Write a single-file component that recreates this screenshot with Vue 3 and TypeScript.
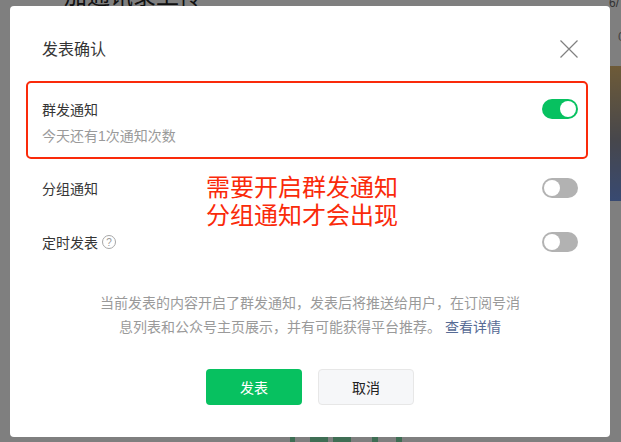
<script setup lang="ts">
import { ref } from 'vue'

interface SwitchRow {
  label: string
  on: boolean
  hint?: boolean
}

const massNotify = ref(true)

const rows = ref<SwitchRow[]>([
  { label: '分组通知', on: false },
  { label: '定时发表', on: false, hint: true },
])

// slivers of the page's green heading that show below the dialog
const slivers = [
  { left: 0, width: 5 },
  { left: 20, width: 18 },
  { left: 43, width: 18 },
  { left: 82, width: 6 },
  { left: 106, width: 6 },
]
</script>

<template>
  <div class="page">
    <!-- page behind the mask -->
    <div class="bg-title">加通讯录上传</div>
    <div class="bg-count">6/</div>
    <div class="bg-digit">0</div>
    <div class="bg-cover"></div>
    <div class="bg-green">
      <i v-for="s in slivers" :key="s.left" :style="{ left: s.left + 'px', width: s.width + 'px' }"></i>
    </div>
    <div class="mask"></div>

    <div class="dialog">
      <div class="head">
        <span class="title">发表确认</span>
        <button class="close" aria-label="关闭">
          <svg width="18" height="18" viewBox="0 0 18 18">
            <path d="M.5.5l17 17M17.5.5l-17 17" stroke="#808080" stroke-width="1.2" fill="none" />
          </svg>
        </button>
      </div>

      <div class="notify-box">
        <div class="row">
          <span class="label">群发通知</span>
          <button class="switch" :class="{ on: massNotify }" @click="massNotify = !massNotify"></button>
        </div>
        <div class="sub">今天还有1次通知次数</div>
      </div>

      <div class="rows">
        <div v-for="r in rows" :key="r.label" class="row">
          <span class="label">{{ r.label }}</span>
          <svg v-if="r.hint" class="help" width="14" height="14" viewBox="0 0 14 14">
            <circle cx="7" cy="7" r="6.5" fill="none" stroke="#a6a6a6" />
            <text x="7" y="10.5" text-anchor="middle" font-size="10" fill="#999" font-family="Liberation Sans, sans-serif">?</text>
          </svg>
          <button class="switch" :class="{ on: r.on }" @click="r.on = !r.on"></button>
        </div>
        <div class="annotation">需要开启群发通知<br />分组通知才会出现</div>
      </div>

      <p class="desc">
        当前发表的内容开启了群发通知，发表后将推送给用户，在订阅号消息列表和公众号主页展示，并有可能获得平台推荐。
        <a class="link">查看详情</a>
      </p>

      <div class="actions">
        <button class="btn primary">发表</button>
        <button class="btn">取消</button>
      </div>
    </div>
  </div>
</template>

<style>
html,
body {
  margin: 0;
  background: #7f7f7f;
}
</style>

<style scoped>
.page {
  position: relative;
  width: 621px;
  height: 442px;
  overflow: hidden;
  background: #fff;
  font-family: "Liberation Sans", "Noto Sans CJK SC", sans-serif;
}
.bg-title {
  position: absolute;
  left: 64px;
  top: -18px;
  font-size: 23px;
  line-height: 28px;
  color: #222;
  white-space: nowrap;
}
.bg-count {
  position: absolute;
  left: 609px;
  top: -4px;
  font-size: 12px;
  line-height: 14px;
  color: #666;
}
.bg-digit {
  position: absolute;
  left: 618px;
  top: 29px;
  font-size: 13px;
  line-height: 16px;
  color: #888;
}
.bg-cover {
  position: absolute;
  left: 600px;
  top: 66px;
  width: 21px;
  height: 135px;
  background: linear-gradient(#dcb670, #8e8e98 55%, #7094e4);
}
.bg-green {
  position: absolute;
  left: 290px;
  top: 437px;
  width: 112px;
  height: 5px;
}
.bg-green i {
  position: absolute;
  top: 0;
  height: 5px;
  background: #7fdca8;
}
.mask {
  position: absolute;
  inset: 0;
  background: rgba(0, 0, 0, 0.5);
}
.dialog {
  position: absolute;
  left: 10px;
  top: 6px;
  width: 600px;
  height: 431px;
  box-sizing: border-box;
  padding: 0 32px;
  background: #fff;
  border-radius: 4px;
  display: flex;
  flex-direction: column;
}
.head {
  height: 86px;
  flex-shrink: 0;
  display: flex;
  align-items: center;
  justify-content: space-between;
}
.title {
  font-size: 16px;
  color: #353535;
  margin-bottom: 2px;
}
.close {
  padding: 0;
  border: 0;
  background: none;
  display: flex;
}
.notify-box {
  margin: -11px -10px 0 -16px;
  height: 78px;
  flex-shrink: 0;
  box-sizing: border-box;
  padding: 16px 8px 0 14px;
  border: 2.5px solid #fa2a0a;
  border-radius: 5px;
}
.row {
  display: flex;
  align-items: center;
  height: 20px;
}
.label {
  font-size: 14px;
  color: #353535;
}
.sub {
  margin-top: 9px;
  font-size: 14px;
  line-height: 16px;
  color: #9a9a9a;
}
.rows {
  position: relative;
  margin-top: 19px;
  display: flex;
  flex-direction: column;
  gap: 34px;
}
.help {
  margin-left: 4px;
}
.switch {
  position: relative;
  margin-left: auto;
  width: 36px;
  height: 20px;
  padding: 0;
  border: 0;
  border-radius: 10px;
  background: #b2b2b2;
}
.switch::after {
  content: "";
  position: absolute;
  left: 2px;
  top: 2px;
  width: 16px;
  height: 16px;
  border-radius: 50%;
  background: #fff;
}
.switch.on {
  background: #07c160;
}
.switch.on::after {
  left: 18px;
}
.annotation {
  position: absolute;
  left: 164px;
  top: -4px;
  font-size: 24px;
  line-height: 28px;
  color: #fa2a0a;
}
.desc {
  width: 424px;
  margin: 39px auto 0;
  font-size: 14px;
  line-height: 24px;
  color: #9a9a9a;
  text-align: center;
}
.link {
  color: #576b95;
}
.actions {
  margin-top: 30px;
  display: flex;
  justify-content: center;
  gap: 16px;
}
.btn {
  width: 96px;
  height: 36px;
  padding: 0;
  box-sizing: border-box;
  border: 1px solid #e7e7e7;
  border-radius: 4px;
  background: #f6f7f9;
  font-family: inherit;
  font-size: 14px;
  color: #222;
}
.btn.primary {
  border: 0;
  background: #07c160;
  color: #fff;
}
</style>
